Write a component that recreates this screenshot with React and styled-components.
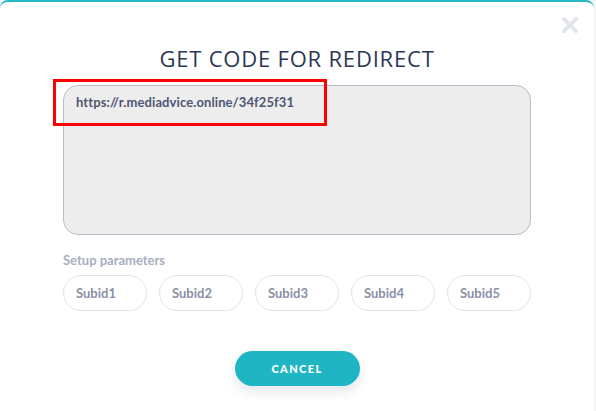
import React from 'react';
import styled, { createGlobalStyle } from 'styled-components';

const Global = createGlobalStyle`
  html, body {
    margin: 0;
    padding: 0;
    background: #f4f5f7;
    font-family: "Lato", "Open Sans", sans-serif;
  }
`;

const Modal = styled.div`
  position: relative;
  box-sizing: border-box;
  width: 594px;
  height: 420px;
  background: #fff;
  border-top: 2px solid #22b8c4;
  border-radius: 8px;
  display: flex;
  flex-direction: column;
  align-items: center;
  padding: 40px 63px 0 63px;
`;

const Close = styled.button`
  position: absolute;
  top: 14px;
  right: 15px;
  width: 18px;
  height: 18px;
  padding: 0;
  border: 0;
  background: transparent;
  cursor: pointer;
  svg { display: block; }
`;

const Title = styled.h2`
  margin: 0;
  font-family: "Open Sans", sans-serif;
  font-weight: 400;
  font-size: 22px;
  line-height: 32px;
  letter-spacing: 0.8px;
  color: #2c3655;
`;

const CodeBox = styled.div`
  position: relative;
  box-sizing: border-box;
  align-self: stretch;
  margin-top: 11px;
  height: 150px;
  background: #ededed;
  border: 1px solid #b9bdcb;
  border-radius: 15px;
  padding: 7px 12px;
  font-size: 13px;
  font-weight: 700;
  letter-spacing: 0.1px;
  color: #4f5673;
  line-height: 18px;
`;

const Highlight = styled.div`
  position: absolute;
  top: -7px;
  left: -11px;
  width: 274px;
  height: 47px;
  box-sizing: border-box;
  border: 3px solid #ff0000;
`;

const Label = styled.div`
  align-self: stretch;
  margin-top: 16px;
  font-size: 13px;
  font-weight: 700;
  color: #a8adbf;
  line-height: 18px;
`;

const Chips = styled.div`
  align-self: stretch;
  margin-top: 6px;
  display: grid;
  grid-template-columns: repeat(5, 1fr);
  gap: 12px;
`;

const Chip = styled.div`
  box-sizing: border-box;
  height: 36px;
  border: 1px solid #e2e5ee;
  border-radius: 18px;
  display: flex;
  align-items: center;
  padding-left: 12px;
  font-size: 13px;
  font-weight: 700;
  color: #8b90a7;
`;

const Cancel = styled.button`
  margin-top: 40px;
  width: 125px;
  height: 35px;
  border: 0;
  border-radius: 18px;
  background: #20b5c2;
  color: #fff;
  font-family: "Lato", sans-serif;
  font-weight: 900;
  font-size: 11px;
  letter-spacing: 1.4px;
  box-shadow: 0 6px 12px rgba(40, 60, 90, 0.12);
  cursor: pointer;
`;

export default function App() {
  return (
    <>
      <Global />
      <Modal>
        <Close aria-label="close">
          <svg viewBox="0 0 18 18" width="18" height="18">
            <path d="M3 3 L15 15 M15 3 L3 15" stroke="#e2e5ee" strokeWidth="4" strokeLinecap="round" />
          </svg>
        </Close>
        <Title>GET CODE FOR REDIRECT</Title>
        <CodeBox>
          https://r.mediadvice.online/34f25f31
          <Highlight />
        </CodeBox>
        <Label>Setup parameters</Label>
        <Chips>
          {[1, 2, 3, 4, 5].map((n) => (
            <Chip key={n}>Subid{n}</Chip>
          ))}
        </Chips>
        <Cancel>CANCEL</Cancel>
      </Modal>
    </>
  );
}
